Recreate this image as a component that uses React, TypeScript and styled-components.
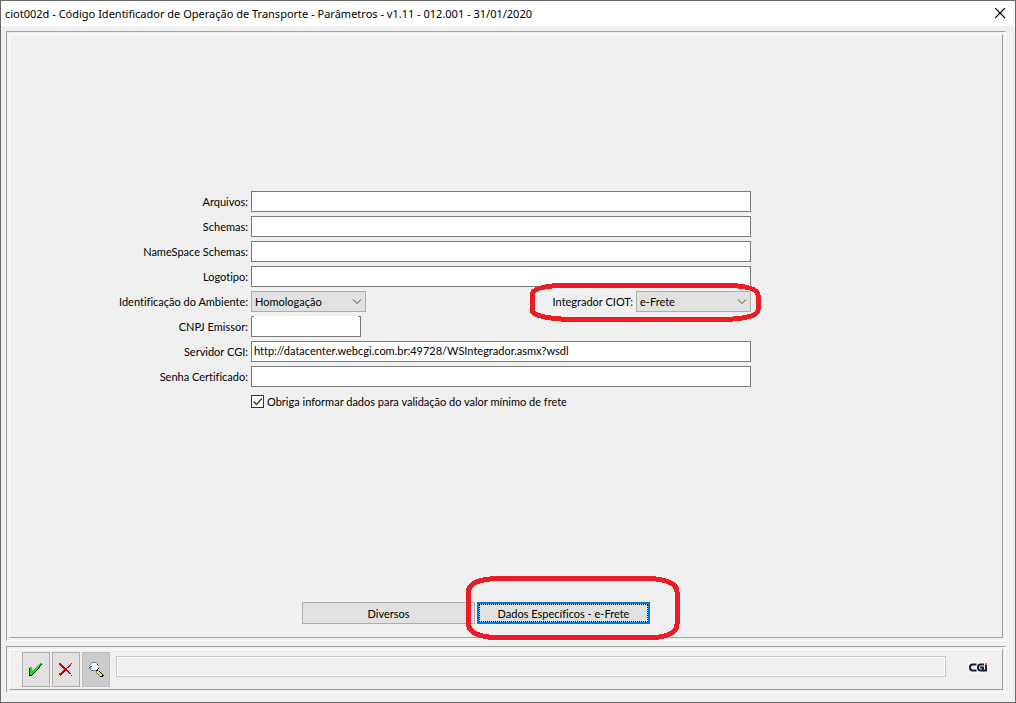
import React from "react";
import styled, { createGlobalStyle, css } from "styled-components";

const GlobalStyle = createGlobalStyle`
  * { box-sizing: border-box; }
  html, body { margin: 0; padding: 0; background: #f0f0f0; }
  body, button, input, select {
    font-family: Lato, "Liberation Sans", Arial, sans-serif;
    font-size: 11px;
    font-variant-ligatures: none;
    color: #000;
  }
`;

const Window = styled.div`
  display: flex;
  flex-direction: column;
  min-height: 100vh;
  border: 1px solid #696969;
  background: #f0f0f0;
`;

const TitleBar = styled.header`
  display: flex;
  align-items: center;
  justify-content: space-between;
  height: 25px;
  padding: 0 9px 0 4px;
  background: #fff;
`;

const Title = styled.h1`
  margin: 0;
  font: 400 11px/16px "Noto Sans", "Open Sans", sans-serif;
  white-space: nowrap;
`;

const CloseButton = styled.button`
  display: flex;
  padding: 0;
  border: 0;
  background: none;
`;

const Body = styled.div`
  display: flex;
  flex: 1;
  flex-direction: column;
  gap: 5px;
  padding: 5px 9px 9px 5px;
`;

const Bevel = styled.section<{ $grow?: boolean }>`
  display: flex;
  ${(p) => p.$grow && css`flex: 1;`}
  padding: 2px;
  border: 1px solid;
  border-color: #a0a0a0 #fff #fff #a0a0a0;
`;

const BevelInner = styled.div`
  display: flex;
  flex: 1;
  border: 1px solid;
  border-color: #fff #a0a0a0 #a0a0a0 #fff;
`;

const Content = styled.form`
  display: flex;
  flex: 1;
  flex-direction: column;
  justify-content: space-between;
  padding: 156px 0 13px;
`;

const Fields = styled.div`
  display: grid;
  gap: 4px;
  padding-right: 251px;
`;

const Row = styled.div`
  display: grid;
  grid-template-columns: 238px minmax(0, 1fr);
  column-gap: 3px;
  align-items: center;
  min-height: 21px;
`;

const Label = styled.label`
  line-height: 16px;
  text-align: right;
  white-space: nowrap;
`;

const TextInput = styled.input<{ $masked?: boolean }>`
  width: 100%;
  height: 21px;
  padding: 0 2px 2px;
  border: 1px solid #7a7a7a;
  border-radius: 0;
  background: #fff;
  outline: none;
  ${(p) =>
    p.$masked &&
    css`
      width: 110px;
      border-top-color: transparent;
      background: linear-gradient(90deg, #7a7a7a 3px, #fff 3px calc(100% - 3px), #7a7a7a calc(100% - 3px))
          border-box top / 100% 1px no-repeat,
        #fff;
    `}
`;

const Split = styled.div`
  display: flex;
  align-items: center;
  justify-content: space-between;
`;

const Group = styled.div`
  position: relative;
  display: flex;
  align-items: center;
  gap: 3px;
`;

const Stack = styled.span`
  display: grid;
  align-items: center;
  > * { grid-area: 1 / 1; }
  > svg { justify-self: end; pointer-events: none; }
`;

const Select = styled.select`
  width: 115px;
  height: 21px;
  padding: 0 4px 0 3px;
  border: 1px solid #adadad;
  border-radius: 0;
  background: #e1e1e1;
  appearance: none;
  outline: none;
`;

const CheckLabel = styled.label`
  display: flex;
  grid-column: 2;
  align-items: center;
  gap: 3px;
  line-height: 16px;
`;

const CheckBox = styled.input`
  width: 13px;
  height: 13px;
  margin: 0;
  border: 1px solid #333;
  background: #fff;
  appearance: none;
`;

const Actions = styled.div`
  display: flex;
  justify-content: center;
  gap: 2px;
  padding-right: 60px;
`;

const PushButton = styled.button<{ $focused?: boolean }>`
  width: 173px;
  height: 22px;
  padding: 0;
  border: 1px solid #adadad;
  background: #e1e1e1;
  ${(p) =>
    p.$focused &&
    css`
      border: 2px solid #0078d7;
      outline: 1px dotted #000;
      outline-offset: -3px;
    `}
`;

const Ring = styled.svg<{ $top: number; $right: number }>`
  position: absolute;
  top: ${(p) => p.$top}px;
  right: ${(p) => p.$right}px;
  fill: none;
  stroke: #ed1c24;
  stroke-width: 5px;
  pointer-events: none;
`;

const Footer = styled.footer`
  display: flex;
  flex: 1;
  gap: 2px;
  padding: 2px 14px 2px 12px;
`;

const ToolButton = styled.button<{ $pressed?: boolean }>`
  display: flex;
  align-items: center;
  justify-content: center;
  width: 28px;
  height: 35px;
  padding: 0;
  border: 1px solid ${(p) => (p.$pressed ? "#bfbfbf" : "#adadad")};
  background: ${(p) => (p.$pressed ? "#ccc" : "#e1e1e1")};
`;

const Status = styled.output`
  flex: 1;
  height: 21px;
  margin: 4px 20px 0 4px;
  border: 1px solid #c8c8c8;
  box-shadow: inset 0 0 0 1px #fff;
`;

const Brand = styled.svg`
  margin-top: 9px;
`;

type Pixel = [color: string, x: number, y: number, w: number, h?: number];

const PixelIcon = ({ pixels }: { pixels: Pixel[] }) => (
  <svg width="16" height="17" shapeRendering="crispEdges" aria-hidden="true">
    {pixels.map(([fill, x, y, width, height = 1], i) => (
      <rect key={i} {...{ fill, x, y, width, height }} />
    ))}
  </svg>
);

const G = "#00f000";
const K = "#000";
const R = "#e00000";
const D = "#800000";
const S = "#808080";
const W = "#fff";
const Y = "#f8f040";

const checkPixels: Pixel[] = [
  [G, 12, 2, 2], [G, 11, 3, 2], [K, 13, 3, 1], [G, 10, 4, 2], [K, 12, 4, 1],
  [G, 9, 5, 2], [K, 11, 5, 1], [G, 2, 6, 2], [G, 8, 6, 3], [K, 11, 6, 1],
  [K, 1, 7, 1, 7], [G, 2, 7, 2, 2], [G, 7, 7, 3], [K, 10, 7, 1], [G, 6, 8, 3], [K, 9, 8, 1],
  [G, 2, 9, 6], [K, 8, 9, 1], [G, 2, 10, 5], [K, 7, 10, 1], [G, 2, 11, 4], [K, 6, 11, 1],
  [G, 2, 12, 3], [K, 5, 12, 1], [G, 2, 13, 2], [K, 4, 13, 1], [K, 1, 14, 3],
];

const crossPixels: Pixel[] = [
  [R, 1, 2, 2], [R, 13, 2, 1], [R, 1, 3, 3], [R, 12, 3, 1], [R, 2, 4, 3], [R, 11, 4, 2],
  [R, 3, 5, 3], [R, 10, 5, 2], [R, 4, 6, 2], [D, 6, 6, 1], [R, 9, 6, 2],
  [R, 5, 7, 2], [D, 7, 7, 2], [R, 6, 8, 2], [D, 8, 8, 1], [R, 5, 9, 2], [D, 7, 9, 1], [R, 8, 9, 2],
  [R, 4, 10, 2], [D, 6, 10, 1], [R, 9, 10, 2], [R, 3, 11, 2], [D, 5, 11, 1], [R, 10, 11, 2],
  [R, 1, 12, 4], [R, 11, 12, 1], [R, 1, 13, 3], [R, 2, 14, 1], [R, 12, 12, 1], [R, 13, 14, 1],
];

const lensPixels: Pixel[] = [
  [S, 4, 1, 5], [S, 3, 2, 1], [W, 4, 2, 5], [S, 9, 2, 1],
  [S, 2, 3, 1], [W, 3, 3, 6], [K, 9, 3, 1],
  [S, 1, 4, 1], [W, 2, 4, 9], [S, 10, 4, 1],
  ["#1060f0", 2, 5, 2], [W, 4, 5, 6], ["#1060f0", 1, 6, 2], [W, 3, 6, 7],
  [S, 1, 7, 1], ["#70d8f0", 2, 7, 2], [W, 4, 7, 6], [K, 10, 7, 1],
  [S, 2, 8, 1], [W, 3, 8, 6], [K, 9, 8, 1],
  [S, 3, 9, 5], [K, 8, 9, 2],
  [S, 8, 10, 1], [Y, 9, 10, 2], [K, 11, 10, 1],
  [S, 8, 11, 1], [Y, 9, 11, 3], [K, 12, 11, 1],
  [S, 9, 12, 1], [Y, 10, 12, 3], [K, 13, 12, 1],
  [S, 10, 13, 1], [Y, 11, 13, 3], [K, 14, 13, 1],
  [S, 11, 14, 1], [Y, 12, 14, 2], [K, 14, 14, 2],
  [K, 12, 15, 3],
];

const Chevron = () => (
  <svg width="18" height="21" fill="none" stroke="#505050" aria-hidden="true">
    <path d="M5 8.5l4 4 4-4" />
  </svg>
);

const Dropdown = ({ id, value }: { id: string; value: string }) => (
  <Stack>
    <Select id={id} defaultValue={value}>
      <option>{value}</option>
    </Select>
    <Chevron />
  </Stack>
);

const Field = ({ id, label, value, masked }: { id: string; label: string; value?: string; masked?: boolean }) => (
  <Row>
    <Label htmlFor={id}>{label}</Label>
    <TextInput id={id} defaultValue={value} $masked={masked} />
  </Row>
);

export default function App() {
  return (
    <Window>
      <GlobalStyle />
      <TitleBar>
        <Title>ciot002d - Código Identificador de Operação de Transporte - Parâmetros - v1.11 - 012.001 - 31/01/2020</Title>
        <CloseButton aria-label="Fechar">
          <svg width="11" height="11" stroke="#000" strokeWidth="1.2" aria-hidden="true">
            <path d="M0 0l10 10M10 0L0 10" />
          </svg>
        </CloseButton>
      </TitleBar>
      <Body>
        <Bevel $grow>
          <BevelInner>
            <Content onSubmit={(e) => e.preventDefault()}>
              <Fields>
                <Field id="arquivos" label="Arquivos:" />
                <Field id="schemas" label="Schemas:" />
                <Field id="namespace" label="NameSpace Schemas:" />
                <Field id="logotipo" label="Logotipo:" />
                <Row>
                  <Label htmlFor="ambiente">Identificação do Ambiente:</Label>
                  <Split>
                    <Dropdown id="ambiente" value="Homologação" />
                    <Group>
                      <Label htmlFor="integrador">Integrador CIOT:</Label>
                      <Dropdown id="integrador" value="e-Frete" />
                      <Ring $top={-8} $right={-10} width="232" height="39" shapeRendering="crispEdges" aria-hidden="true">
                        <path d="M30 2.500H202Q229 4 229 12V27Q229 34 204 36H32Q3 34 3 27V12Q3 4 30 2.500Z" />
                      </Ring>
                    </Group>
                  </Split>
                </Row>
                <Field id="cnpj" label="CNPJ Emissor:" masked />
                <Field id="servidor" label="Servidor CGI:" value="http://datacenter.webcgi.com.br:49728/WSIntegrador.asmx?wsdl" />
                <Field id="senha" label="Senha Certificado:" />
                <Row>
                  <CheckLabel>
                    <Stack>
                      <CheckBox type="checkbox" defaultChecked />
                      <svg width="13" height="13" fill="none" stroke="#333" strokeWidth="1.3" aria-hidden="true">
                        <path d="M2.500 6.500l3 3 5.500-6" />
                      </svg>
                    </Stack>
                    Obriga informar dados para validação do valor mínimo de frete
                  </CheckLabel>
                </Row>
              </Fields>
              <Actions>
                <PushButton type="button">Diversos</PushButton>
                <Group>
                  <PushButton type="button" $focused>Dados Específicos - e-Frete</PushButton>
                  <Ring $top={-26} $right={-30} width="214" height="64" shapeRendering="crispEdges" aria-hidden="true">
                    <path d="M30 2.500H184Q211 4 211 16V48Q211 59 190 61.500H26Q2.500 59 2.500 48V16Q2.500 4 30 2.500Z" />
                  </Ring>
                </Group>
              </Actions>
            </Content>
          </BevelInner>
        </Bevel>
        <Bevel>
          <BevelInner>
            <Footer>
              <ToolButton aria-label="Confirmar"><PixelIcon pixels={checkPixels} /></ToolButton>
              <ToolButton aria-label="Cancelar"><PixelIcon pixels={crossPixels} /></ToolButton>
              <ToolButton aria-label="Pesquisar" $pressed><PixelIcon pixels={lensPixels} /></ToolButton>
              <Status />
              <Brand width="20" height="12" role="img" aria-label="CGI">
                <path fill="#f6f6f6" d="M0 0h20v12H0z" />
                <g fill="none" stroke="#14203c" strokeWidth="2">
                  <path d="M8.500 3.500H4.500Q2 3.500 2 6.500t2.500 3H8.500" />
                  <path d="M16 3.500h-3.500Q10 3.500 10 6.500t2.500 3H15V6.500h-3" />
                  <path d="M18 4v6.500M15 9.500h3" />
                </g>
                <path fill="#f08020" d="M17 2h2v2h-2z" />
              </Brand>
            </Footer>
          </BevelInner>
        </Bevel>
      </Body>
    </Window>
  );
}
